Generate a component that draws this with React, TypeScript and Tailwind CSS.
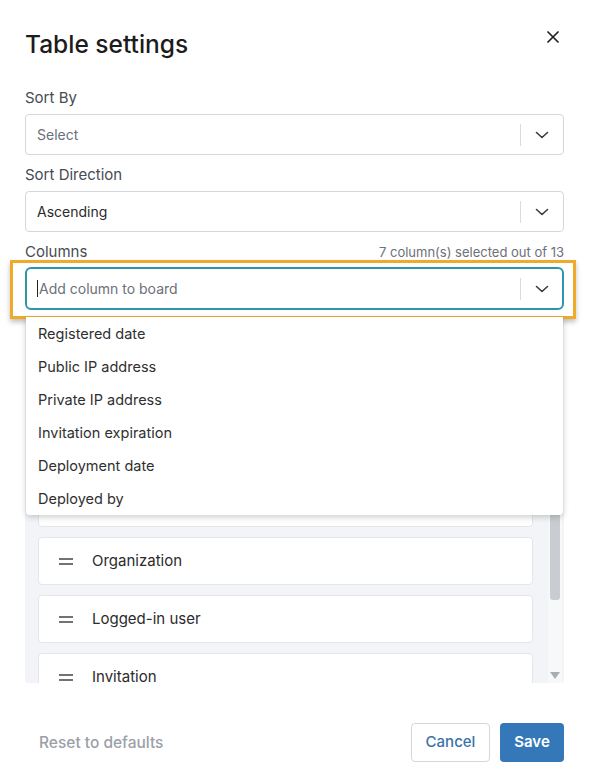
import React from "react";

const Chevron = () => (
  <svg width="14" height="8" viewBox="0 0 14 8" fill="none">
    <path d="M1.5 1.5 L7 6.5 L12.5 1.5" stroke="#3a3a3a" strokeWidth="1.6" strokeLinecap="round" strokeLinejoin="round" />
  </svg>
);

const CloseIcon = () => (
  <svg width="12" height="12" viewBox="0 0 12 12" fill="none">
    <path d="M1 1 L11 11 M11 1 L1 11" stroke="#222" strokeWidth="1.7" strokeLinecap="round" />
  </svg>
);

const Handle = () => (
  <svg width="14" height="7" viewBox="0 0 14 7" fill="none">
    <path d="M0 1 H14 M0 6 H14" stroke="#444" strokeWidth="1.5" />
  </svg>
);

function SelectBox({ value, placeholder }: { value?: string; placeholder?: string }) {
  return (
    <div className="flex h-[41px] items-center rounded-[4px] border border-[#d4d7db] bg-white">
      <div className={`flex-1 pl-[11px] text-[14px] ${value ? "text-[#2a2a2a]" : "text-[#6b7079]"}`}>
        {value ?? placeholder}
      </div>
      <div className="h-[22px] w-px bg-[#d9dbde]" />
      <div className="flex w-[42px] items-center justify-center">
        <Chevron />
      </div>
    </div>
  );
}

const menuItems = [
  "Registered date",
  "Public IP address",
  "Private IP address",
  "Invitation expiration",
  "Deployment date",
  "Deployed by",
];

const selectedColumns = [
  "Device name",
  "Status",
  "Last seen",
  "Owner",
  "Organization",
  "Logged-in user",
  "Invitation",
];

export default function App() {
  return (
    <div
      className="relative h-[783px] w-[590px] overflow-hidden bg-white pl-[25px] pr-[26px]"
      style={{ fontFamily: "Inter, 'Noto Sans', sans-serif" }}
    >
      {/* header */}
      <div className="flex items-start justify-between pt-[30px]">
        <h1 className="text-[24.5px] leading-[28px] font-medium text-[#1c1c1c]">Table settings</h1>
        <button className="mr-[5px] mt-[1px] p-0">
          <CloseIcon />
        </button>
      </div>

      <div className="mt-[30px] text-[15px] leading-[20px] text-[#474b52]">Sort By</div>
      <div className="mt-[6px]">
        <SelectBox placeholder="Select" />
      </div>

      <div className="mt-[10px] text-[15px] leading-[20px] text-[#474b52]">Sort Direction</div>
      <div className="mt-[6px]">
        <SelectBox value="Ascending" />
      </div>

      <div className="mt-[10px] flex items-end justify-between">
        <span className="text-[15px] leading-[20px] text-[#474b52]">Columns</span>
        <span className="pb-[1px] text-[13px] leading-[18px] text-[#6b7079]">7 column(s) selected out of 13</span>
      </div>

      {/* column picker with its open menu */}
      <div className="relative z-10 mt-[5px]">
        <div className="pointer-events-none absolute -left-[15px] -right-[12px] -top-[7px] -bottom-[9px] border-[3px] border-[#f0aa2b] shadow-[0_3px_5px_rgba(0,0,0,0.25)]" />
        <div className="flex h-[43px] items-center rounded-[6px] border-2 border-[#2d97aa] bg-white">
          <div className="flex flex-1 items-center pl-[10px] text-[14px] text-[#6b7079]">
            <span className="mr-[1px] h-[17px] w-px bg-[#222]" />
            Add column to board
          </div>
          <div className="h-[22px] w-px bg-[#d9dbde]" />
          <div className="flex w-[41px] items-center justify-center">
            <Chevron />
          </div>
        </div>

        <div className="absolute left-[1px] right-[1px] top-[50px] rounded-b-[4px] bg-white shadow-[0_2px_6px_rgba(0,0,0,0.2)]">
          {menuItems.map((item) => (
            <div key={item} className="flex h-[33px] items-center pl-[12px] text-[14.5px] text-[#2f2f2f]">
              {item}
            </div>
          ))}
        </div>
      </div>

      {/* selected columns list */}
      <div className="mt-[7px] flex h-[366px] overflow-hidden rounded-[3px] bg-[#f2f4f7]">
        <div className="flex-1 overflow-hidden pl-[13px]">
          <div className="-mt-[12px] flex flex-col gap-[10px]">
            {selectedColumns.map((c) => (
              <div
                key={c}
                className="flex h-[48px] shrink-0 items-center rounded-[4px] border border-[#e3e6ea] bg-white pl-[20px] text-[15px] text-[#2b2b2b]"
              >
                <Handle />
                <span className="ml-[19px]">{c}</span>
              </div>
            ))}
          </div>
        </div>
        <div className="ml-[15px] mr-[2px] flex w-[14px] flex-col items-center bg-[#f7f8fa]">
          <div className="mt-[170px] h-[113px] w-[10px] rounded-[3px] bg-[#c9cdd2]" />
          <div className="flex-1" />
          <div className="mb-[4px] h-0 w-0 border-x-[5px] border-t-[7px] border-x-transparent border-t-[#a9adb3]" />
        </div>
      </div>

      {/* footer */}
      <div className="mt-[40px] flex items-center justify-between">
        <button className="pl-[14px] text-[15.5px] font-medium text-[#9aa0a8]">Reset to defaults</button>
        <div className="flex gap-[10px]">
          <button className="h-[39px] w-[79px] rounded-[4px] border border-[#d4d7db] bg-white text-[15px] font-medium text-[#3b72a8]">
            Cancel
          </button>
          <button className="h-[39px] w-[64px] rounded-[4px] bg-[#3578b9] text-[15px] font-semibold text-white">
            Save
          </button>
        </div>
      </div>
    </div>
  );
}
